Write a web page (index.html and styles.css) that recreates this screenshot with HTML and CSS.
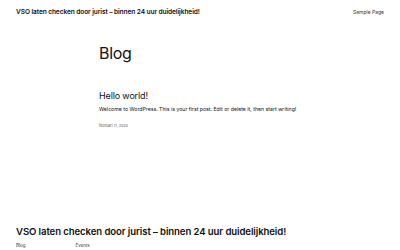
FILE: index.html
```html
<!DOCTYPE html>
<html lang="nl">
<head>
<meta charset="utf-8">
<title>Blog</title>
<link rel="stylesheet" href="styles.css">
</head>
<body>
<header class="site-header">
  <a class="site-title" href="#">VSO laten checken door jurist – binnen 24 uur duidelijkheid!</a>
  <nav class="site-nav"><a href="#">Sample Page</a></nav>
</header>
<main class="content">
  <h1 class="page-title">Blog</h1>
  <article class="post">
    <h2 class="post-title"><a href="#">Hello world!</a></h2>
    <p class="post-excerpt">Welcome to WordPress. This is your first post. Edit or delete it, then start writing!</p>
    <p class="post-date">februari 11, 2026</p>
  </article>
</main>
<footer class="site-footer">
  <h2 class="footer-title">VSO laten checken door jurist – binnen 24 uur duidelijkheid!</h2>
  <nav class="footer-nav">
    <a href="#">Blog</a>
    <a href="#">Events</a>
  </nav>
</footer>
</body>
</html>
```
FILE: styles.css
```css
* { box-sizing: border-box; }
html, body { margin: 0; padding: 0; }
body {
  background: #fff;
  color: #111;
  font-family: Inter, "Noto Sans", sans-serif;
  width: 400px;
}
a { color: #111; text-decoration: none; }
.site-header {
  display: flex;
  justify-content: space-between;
  align-items: center;
  padding: 6px 16px 0 16px;
  height: 17px;
}
.site-title {
  font-size: 6.6px;
  font-weight: 600;
  letter-spacing: -0.1px;
}
.site-nav {
  font-size: 5px;
}
.site-nav a { color: #333; }
.content {
  padding: 0 99px;
}
.page-title {
  font-size: 16px;
  font-weight: 400;
  margin: 26px 0 0 0;
  line-height: 20px;
  letter-spacing: -0.3px;
}
.post { margin-top: 27px; }
.post-title {
  font-size: 9px;
  font-weight: 400;
  margin: 0;
  line-height: 11px;
  letter-spacing: -0.15px;
}
.post-excerpt {
  font-size: 5.2px;
  margin: 5px 0 0 0;
  line-height: 6px;
  color: #111;
}
.post-date {
  font-size: 3.7px;
  color: #555;
  margin: 11px 0 0 0;
  line-height: 5px;
}
.site-footer {
  padding: 97px 16px 0 16px;
}
.footer-title {
  font-size: 9.6px;
  font-weight: 600;
  margin: 0;
  line-height: 13px;
  letter-spacing: -0.1px;
}
.footer-nav {
  display: flex;
  gap: 50px;
  font-size: 4.5px;
  margin-top: 5px;
}
.footer-nav a { color: #333; }
```
